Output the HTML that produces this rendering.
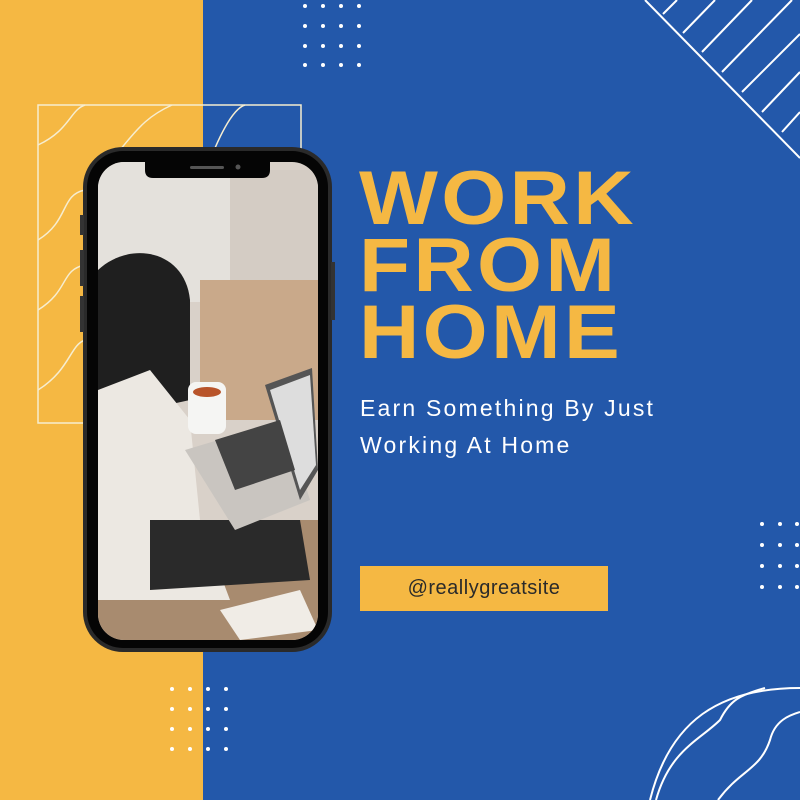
<!DOCTYPE html>
<html><head><style>
body{margin:0;width:800px;height:800px;overflow:hidden;position:relative;background:#2358aa;font-family:"Liberation Sans",sans-serif}
.y{position:absolute;left:0;top:0;width:203px;height:800px;background:#f5b843}
.t{position:absolute;left:359px;top:165px;color:#f5b843;font-weight:bold;font-size:76px;line-height:67px;letter-spacing:3px;transform:scaleX(1.1);transform-origin:0 0}
.s{position:absolute;left:360px;top:390px;color:#fff;font-size:23px;line-height:37px;letter-spacing:2.2px}
.b{position:absolute;left:360px;top:566px;width:248px;height:45px;background:#f5b843;color:#2a2a2a;font-size:20px;line-height:45px;text-align:center;letter-spacing:.5px}
</style></head><body>
<div class="y"></div>
<svg width="800" height="800" style="position:absolute;left:0;top:0">
<defs><clipPath id="sc"><rect x="98" y="162" width="220" height="478" rx="26"/></clipPath></defs>
<g fill="#fff">
<circle cx="305" cy="6" r="2"/><circle cx="323" cy="6" r="2"/><circle cx="341" cy="6" r="2"/><circle cx="359" cy="6" r="2"/>
<circle cx="305" cy="26" r="2"/><circle cx="323" cy="26" r="2"/><circle cx="341" cy="26" r="2"/><circle cx="359" cy="26" r="2"/>
<circle cx="305" cy="46" r="2"/><circle cx="323" cy="46" r="2"/><circle cx="341" cy="46" r="2"/><circle cx="359" cy="46" r="2"/>
<circle cx="305" cy="65" r="2"/><circle cx="323" cy="65" r="2"/><circle cx="341" cy="65" r="2"/><circle cx="359" cy="65" r="2"/>
<circle cx="172" cy="689" r="2"/><circle cx="190" cy="689" r="2"/><circle cx="208" cy="689" r="2"/><circle cx="226" cy="689" r="2"/>
<circle cx="172" cy="709" r="2"/><circle cx="190" cy="709" r="2"/><circle cx="208" cy="709" r="2"/><circle cx="226" cy="709" r="2"/>
<circle cx="172" cy="729" r="2"/><circle cx="190" cy="729" r="2"/><circle cx="208" cy="729" r="2"/><circle cx="226" cy="729" r="2"/>
<circle cx="172" cy="749" r="2"/><circle cx="190" cy="749" r="2"/><circle cx="208" cy="749" r="2"/><circle cx="226" cy="749" r="2"/>
<circle cx="762" cy="524" r="2"/><circle cx="780" cy="524" r="2"/><circle cx="797" cy="524" r="2"/>
<circle cx="762" cy="545" r="2"/><circle cx="780" cy="545" r="2"/><circle cx="797" cy="545" r="2"/>
<circle cx="762" cy="566" r="2"/><circle cx="780" cy="566" r="2"/><circle cx="797" cy="566" r="2"/>
<circle cx="762" cy="587" r="2"/><circle cx="780" cy="587" r="2"/><circle cx="797" cy="587" r="2"/>
</g>
<g stroke="#f6edd0" stroke-width="1.5" fill="none">
<rect x="38" y="105" width="263" height="318"/>
<path d="M38 145 C70 130 70 110 85 105 M120 150 C140 125 150 115 172 105 M215 148 C225 125 235 108 245 105 M38 240 C70 220 60 195 85 190 M38 310 C70 290 60 270 85 265 M38 390 C70 370 70 345 85 340"/>
</g>
<g stroke="#fff" stroke-width="2" fill="none">
<path d="M645 0 L800 158"/>
<path d="M663 14 L677 0 M683 33 L715 0 M702 52 L752 0 M722 72 L792 0 M742 92 L800 34 M762 112 L800 72 M782 132 L800 112"/>
<path d="M650 800 C670 720 720 688 800 688"/>
<path d="M656 800 C670 750 700 740 720 720 C730 700 740 695 765 688"/>
<path d="M718 800 C740 770 760 770 770 740 C775 720 790 715 800 712"/>
</g>
<rect x="83" y="147" width="249" height="505" rx="40" fill="#2a2a2a"/>
<rect x="80" y="215" width="4" height="20" fill="#333"/><rect x="80" y="250" width="4" height="36" fill="#333"/><rect x="80" y="296" width="4" height="36" fill="#333"/><rect x="331" y="262" width="4" height="58" fill="#333"/>
<rect x="87" y="151" width="241" height="497" rx="36" fill="#050505"/>
<g clip-path="url(#sc)">
<rect x="98" y="162" width="220" height="478" fill="#d9d1c9"/>
<rect x="98" y="162" width="140" height="140" fill="#e4e1dc"/>
<rect x="200" y="280" width="118" height="140" fill="#c9a98a"/>
<rect x="230" y="170" width="88" height="110" fill="#d4ccc4"/>
<rect x="98" y="520" width="220" height="120" fill="#a88b6f"/>
<path d="M98 270 C130 240 185 250 190 300 L190 400 L98 420Z" fill="#1f1f1f"/>
<path d="M98 390 L150 370 L190 420 L200 520 L230 600 L98 600Z" fill="#ece8e2"/>
<path d="M150 520 L300 520 L310 580 L150 590Z" fill="#2a2a2a"/>
<path d="M185 450 L285 420 L310 500 L235 530Z" fill="#c9c5c0"/>
<path d="M265 385 L312 368 L318 470 L300 500Z" fill="#555"/>
<path d="M270 390 L310 375 L316 465 L300 490Z" fill="#ddd"/>
<path d="M215 440 L280 420 L295 470 L235 490Z" fill="#444"/>
<rect x="188" y="382" width="38" height="52" rx="8" fill="#f5f5f3"/>
<ellipse cx="207" cy="392" rx="14" ry="5" fill="#b8542a"/>
<path d="M220 610 L300 590 L318 630 L240 640Z" fill="#f0ece6"/>
</g>
<path d="M145 162 H270 V170 Q270 178 262 178 H153 Q145 178 145 170Z" fill="#050505"/>
<rect x="190" y="166" width="34" height="3" rx="1.5" fill="#555"/><circle cx="238" cy="167" r="2.5" fill="#555"/>
</svg>
<div class="t">WORK<br>FROM<br>HOME</div>
<div class="s">Earn Something By Just<br>Working At Home</div>
<div class="b">@reallygreatsite</div>
</body></html>
